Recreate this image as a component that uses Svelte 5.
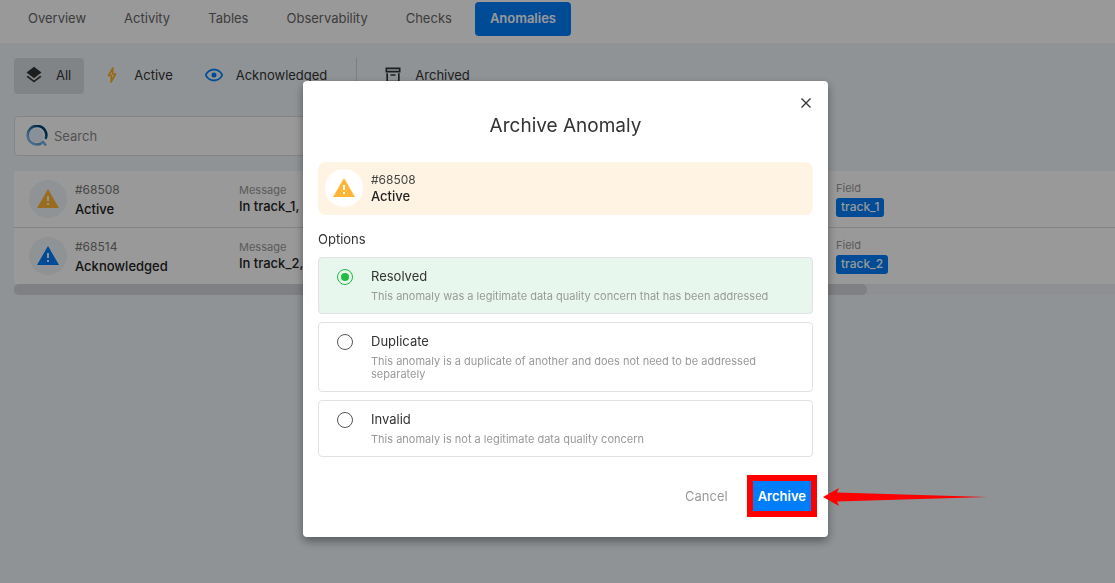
<script lang="ts">
  const tabs = ['Overview', 'Activity', 'Tables', 'Observability', 'Checks', 'Anomalies'];

  const anomalies = [
    { id: 68508, status: 'Active', message: 'In track_1,', field: 'track_1' },
    { id: 68514, status: 'Acknowledged', message: 'In track_2,', field: 'track_2' }
  ];

  const options = [
    {
      value: 'resolved',
      label: 'Resolved',
      hint: 'This anomaly was a legitimate data quality concern that has been addressed'
    },
    {
      value: 'duplicate',
      label: 'Duplicate',
      hint: 'This anomaly is a duplicate of another and does not need to be addressed separately'
    },
    {
      value: 'invalid',
      label: 'Invalid',
      hint: 'This anomaly is not a legitimate data quality concern'
    }
  ];

  let activeTab = $state('Anomalies');
  let search = $state('');
  let selected = $state('resolved');
</script>

{#snippet warning()}
  <svg viewBox="0 0 24 24" width="24" height="24" aria-hidden="true">
    <path fill="currentColor" d="M13 14h-2V9h2m0 9h-2v-2h2M1 21h22L12 2 1 21z" />
  </svg>
{/snippet}

<div class="page">
  <nav class="tabs">
    {#each tabs as tab}
      <button class="tab" class:active={tab === activeTab} onclick={() => (activeTab = tab)}>{tab}</button>
    {/each}
  </nav>

  <main>
    <div class="filters">
      <button class="filter active">
        <svg viewBox="0 0 24 24" width="20" height="20" aria-hidden="true">
          <path fill="currentColor" d="M12 16l7.36-5.73L21 9l-9-7-9 7 1.63 1.27M12 18.54l-7.38-5.73L3 14.07l9 7 9-7-1.63-1.27L12 18.54z" />
        </svg>
        All
      </button>
      <button class="filter">
        <svg class="amber" viewBox="0 0 20 20" width="20" height="20" aria-hidden="true">
          <path fill="none" stroke="currentColor" stroke-width="1.6" stroke-linejoin="round" d="M11 3L6.500 10.500h3L9 17l4.500-8h-3z" />
        </svg>
        Active
      </button>
      <button class="filter">
        <svg class="blue" viewBox="0 0 24 24" width="20" height="20" aria-hidden="true">
          <path fill="currentColor" d="M12 9a3 3 0 0 1 3 3 3 3 0 0 1-3 3 3 3 0 0 1-3-3 3 3 0 0 1 3-3m0-4.500c5 0 9.270 3.110 11 7.500-1.730 4.390-6 7.500-11 7.500S2.730 16.390 1 12c1.730-4.390 6-7.500 11-7.500M3.180 12a9.821 9.821 0 0 0 17.640 0 9.821 9.821 0 0 0-17.640 0z" />
        </svg>
        Acknowledged
      </button>
      <span class="divider"></span>
      <button class="filter">
        <svg viewBox="0 0 24 24" width="20" height="20" aria-hidden="true">
          <path fill="currentColor" d="M20 21H4V10h2v9h12v-9h2v11M3 3h18v6H3V3m6.500 8h5a.5.5 0 0 1 .5.5V13H9v-1.500a.5.5 0 0 1 .5-.5M5 5v2h14V5H5z" />
        </svg>
        Archived
      </button>
    </div>

    <label class="search">
      <svg viewBox="0 0 22 22" width="22" height="22" aria-hidden="true">
        <defs>
          <linearGradient id="ring" x1="0" y1="1" x2="1" y2="0">
            <stop offset="0.2" stop-color="#75b2e6" />
            <stop offset="0.8" stop-color="#004578" />
          </linearGradient>
        </defs>
        <circle cx="10.500" cy="10.500" r="7" fill="#e4f0fc" />
        <path fill="none" stroke="url(#ring)" stroke-width="2.600" d="M19.500 14A9.300 9.300 0 1 0 15 18.600" />
        <path fill="none" stroke="#75b2e6" stroke-width="2.600" d="M14.500 18.500L17 17l3 3.500" />
      </svg>
      <input type="text" placeholder="Search" aria-label="Search" bind:value={search} />
    </label>

    <table>
      <tbody>
        {#each anomalies as item}
          <tr>
            <td class="anomaly">
              <div class="summary">
                <span class="badge" class:blue={item.status === 'Acknowledged'}>{@render warning()}</span>
                <div>
                  <div class="id">#{item.id}</div>
                  <div class="status">{item.status}</div>
                </div>
              </div>
            </td>
            <td class="message">
              <div class="caption">Message</div>
              <div class="text">{item.message}</div>
            </td>
            <td>
              <div class="caption">Field</div>
              <div class="chip">{item.field}</div>
            </td>
          </tr>
        {/each}
      </tbody>
    </table>
    <div class="scrollbar"><div class="thumb"></div></div>
  </main>
</div>

<div class="overlay">
  <div class="dialog" role="dialog" aria-modal="true" aria-labelledby="dialog-title">
    <button class="close" aria-label="Close">
      <svg viewBox="0 0 12 12" width="12" height="12" aria-hidden="true">
        <path fill="none" stroke="currentColor" stroke-width="1.3" d="M1.500 1.500l9 9M10.500 1.500l-9 9" />
      </svg>
    </button>
    <h2 id="dialog-title">Archive Anomaly</h2>

    <div class="subject">
      <span class="badge">{@render warning()}</span>
      <div>
        <div class="id">#68508</div>
        <div class="status">Active</div>
      </div>
    </div>

    <fieldset>
      <legend>Options</legend>
      {#each options as option}
        <label class="option" class:checked={selected === option.value}>
          <input type="radio" name="reason" value={option.value} bind:group={selected} />
          <span>
            <span class="option-label">{option.label}</span>
            <span class="option-hint">{option.hint}</span>
          </span>
        </label>
      {/each}
    </fieldset>

    <div class="actions">
      <button class="cancel">Cancel</button>
      <div class="highlight">
        <button class="archive">Archive</button>
        <svg class="arrow" viewBox="0 0 164 20" width="164" height="20" aria-hidden="true">
          <path fill="#f00" d="M0 10L16 1l-2 4.500L164 10 14 14.500l2 4.500z" />
        </svg>
      </div>
    </div>
  </div>
</div>

<style>
  :global(body) {
    background: #eef5fa;
    color: #333;
    font-family: Inter, 'Liberation Sans', sans-serif;
    font-size: 13px;
    line-height: 16px;
  }

  button {
    border: 0;
    background: none;
    padding: 0;
    color: inherit;
    font: inherit;
    cursor: pointer;
  }

  .page {
    min-height: 100vh;
    overflow: hidden;
  }

  .tabs {
    display: flex;
    gap: 8px;
    padding: 2px 13px 7px;
    background: #fff;
  }

  .tab {
    height: 34px;
    padding: 0 15px 2px;
    border-radius: 4px;
    color: #666;
  }

  .tab.active {
    background: #007dfa;
    color: #fff;
    font-weight: 600;
  }

  main {
    padding: 15px 0 0 14px;
  }

  .filters {
    display: flex;
    gap: 8px;
  }

  .filter {
    display: flex;
    align-items: center;
    gap: 12px;
    height: 36px;
    padding: 0 13px 2px 10px;
    border-radius: 4px;
  }

  .filter.active {
    background: #d6dde1;
  }

  .divider {
    width: 1px;
    margin: 0 8px;
    background: #ccd4da;
  }

  .amber {
    color: #ffae21;
  }

  .blue {
    color: #007dfa;
  }

  .search {
    display: flex;
    align-items: center;
    gap: 4px;
    width: 50%;
    height: 38px;
    margin: 22px 0 15px;
    padding: 0 11px;
    border: 1px solid #ddd;
    border-radius: 4px;
    background: #fff;
  }

  .search input {
    flex: 1;
    border: 0;
    outline: 0;
    background: none;
    font: inherit;
  }

  .search input::placeholder {
    color: #888;
  }

  table {
    width: 100%;
    table-layout: fixed;
    border-collapse: collapse;
    background: #fff;
  }

  td {
    height: 56px;
    padding: 0;
    vertical-align: middle;
  }

  tr + tr td {
    border-top: 1px solid #ddd;
  }

  .anomaly {
    width: 225px;
  }

  .message {
    width: 597px;
  }

  .summary,
  .subject {
    display: flex;
    align-items: center;
    gap: 8px;
  }

  .summary {
    padding-left: 15px;
  }

  .badge {
    display: grid;
    place-items: center;
    width: 38px;
    height: 38px;
    border-radius: 50%;
    background: #eef5fa;
    color: #ffb535;
  }

  .badge.blue {
    color: #007dfa;
  }

  .id {
    color: #777;
    font-size: 12px;
  }

  .status {
    color: #222;
    font-weight: 500;
  }

  .summary .status {
    margin-top: 3px;
  }

  .caption {
    color: #999;
    font-size: 11px;
  }

  .text {
    padding-bottom: 2px;
    color: #222;
    font-weight: 500;
  }

  .chip {
    width: fit-content;
    margin: 2px 0;
    padding: 1px 5px 2px;
    border-radius: 3px;
    background: #007dfa;
    color: #fff;
    font-size: 12px;
    font-weight: 500;
  }

  .scrollbar {
    background: #eceff6;
  }

  .thumb {
    width: 77.5%;
    height: 11px;
    border-radius: 6px;
    background: #d3d6da;
  }

  .overlay {
    position: fixed;
    inset: 0;
    display: grid;
    place-items: center;
    padding: 35px 0 0 16px;
    background: rgb(0 0 0 / 40%);
  }

  .dialog {
    position: relative;
    box-sizing: border-box;
    width: 100%;
    max-width: 525px;
    padding: 33px 15px 20px;
    border-radius: 4px;
    background: #fff;
    box-shadow: 0 4px 10px rgb(0 0 0 / 40%);
  }

  .close {
    position: absolute;
    top: 12px;
    right: 12px;
    display: grid;
    place-items: center;
    width: 20px;
    height: 20px;
  }

  h2 {
    margin: 0 0 24px;
    font-size: 19px;
    font-weight: 400;
    line-height: 24px;
    text-align: center;
  }

  .subject {
    height: 51px;
    padding: 0 7px 2px;
    border-radius: 8px;
    background: #fff4e3;
  }

  .subject .badge {
    background: #fff;
  }

  .subject .id {
    color: #444;
  }

  fieldset {
    display: flex;
    flex-direction: column;
    gap: 8px;
    margin: 0;
    padding: 0;
    border: 0;
  }

  legend {
    padding: 16px 0 10px;
  }

  .option {
    display: flex;
    gap: 18px;
    padding: 10px 18px;
    border: 1px solid #e2e2e2;
    border-radius: 4px;
  }

  .option.checked {
    background: #e8f7ed;
  }

  .option input {
    flex: none;
    display: grid;
    place-items: center;
    box-sizing: border-box;
    appearance: none;
    width: 16px;
    height: 16px;
    margin: 1px 0 0;
    border: 1px solid #555;
    border-radius: 50%;
  }

  .option input:checked {
    border-color: #21bb42;
  }

  .option input:checked::before {
    content: '';
    width: 8px;
    height: 8px;
    border-radius: 50%;
    background: #21bb42;
  }

  .option-label,
  .option-hint {
    display: block;
  }

  .option-hint {
    margin-top: 6px;
    color: #999;
    font-size: 11px;
    line-height: 13px;
  }

  .actions {
    display: flex;
    align-items: center;
    justify-content: flex-end;
    gap: 19px;
    margin: 18px -4px 0 0;
  }

  .cancel {
    color: #999;
  }

  .highlight {
    position: relative;
    border: 6px solid #f00;
  }

  .archive {
    display: block;
    height: 30px;
    padding: 0 5px;
    background: #007dfa;
    color: #fff;
    font-weight: 600;
  }

  .arrow {
    position: absolute;
    top: 6px;
    left: calc(100% + 12px);
  }
</style>
